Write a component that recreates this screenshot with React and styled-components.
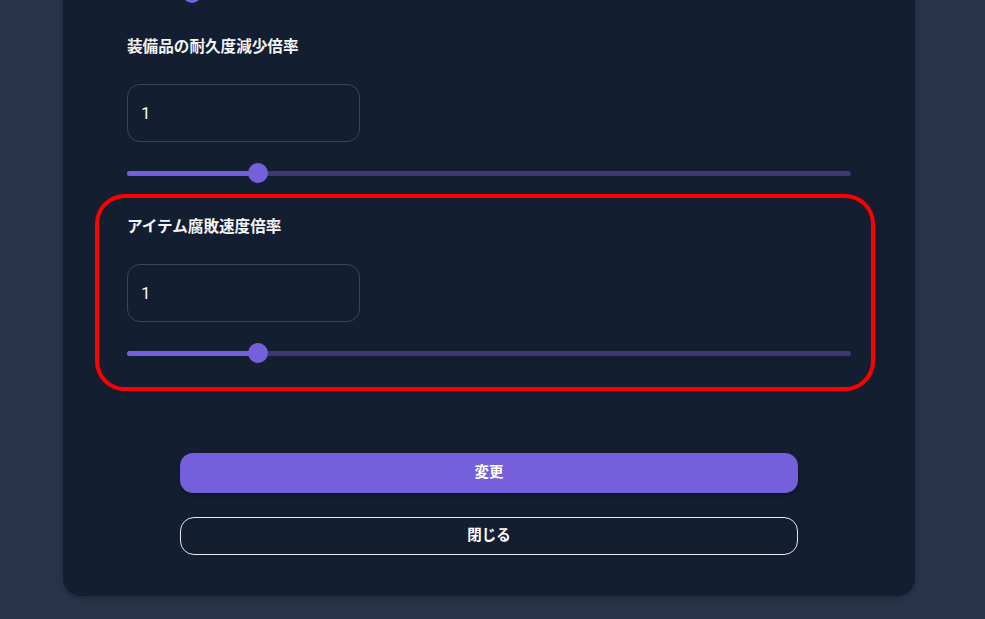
import React from "react";
import styled, { createGlobalStyle } from "styled-components";

const Global = createGlobalStyle`
  html, body { margin: 0; padding: 0; background: #29344b; }
  body { overflow: hidden; font-family: "Inter", "Noto Sans CJK JP", sans-serif; }
`;

const Page = styled.div`
  width: 985px;
  height: 619px;
  overflow: hidden;
  padding-left: 63px;
  box-sizing: border-box;
`;

const Card = styled.div`
  width: 852px;
  margin-top: -57px;
  box-sizing: border-box;
  background: #131e31;
  border-radius: 18px;
  padding: 40px 64px 41px;
  box-shadow: 0 2px 6px rgba(0, 0, 0, 0.25);
  display: flex;
  flex-direction: column;
`;

const Fields = styled.div`
  display: flex;
  flex-direction: column;
  gap: 31px;
`;

const Field = styled.div`
  position: relative;
  display: flex;
  flex-direction: column;
`;

const Label = styled.div`
  font-family: "Noto Sans CJK JP", sans-serif;
  font-weight: 700;
  font-size: 15.6px;
  line-height: 22px;
  color: #f3f4f6;
  margin-bottom: 28px;
`;

const Input = styled.input`
  width: 233px;
  height: 58px;
  box-sizing: border-box;
  border: 1px solid #3b4558;
  border-radius: 13px;
  background: transparent;
  color: #f3f4f6;
  font-family: "Roboto", "Noto Sans CJK JP", sans-serif;
  font-size: 17px;
  padding: 0 13px;
  outline: none;
  margin-bottom: 21px;
`;

const SliderRow = styled.div`
  position: relative;
  height: 20px;
  display: flex;
  align-items: center;
`;

const Track = styled.div`
  position: relative;
  width: 100%;
  height: 5px;
  border-radius: 3px;
  background: #3b3872;
`;

const Fill = styled.div`
  height: 100%;
  border-radius: 3px;
  background: #7360da;
`;

const Thumb = styled.div`
  position: absolute;
  top: 50%;
  width: 20px;
  height: 20px;
  border-radius: 50%;
  background: #7460db;
  transform: translate(-50%, -50%);
`;

const Highlight = styled.div`
  position: absolute;
  top: -20px;
  left: -32px;
  right: -24px;
  bottom: -28px;
  border: 4px solid #ff0000;
  border-radius: 30px;
  pointer-events: none;
`;

const Buttons = styled.div`
  margin: 90px 53px 0;
  display: flex;
  flex-direction: column;
  gap: 24px;
`;

const Button = styled.button`
  width: 100%;
  height: ${(p) => (p.$primary ? "40px" : "38px")};
  border-radius: ${(p) => (p.$primary ? "13px" : "14px")};
  border: ${(p) => (p.$primary ? "none" : "1px solid #e8e8ee")};
  background: ${(p) => (p.$primary ? "#7360da" : "transparent")};
  color: #ffffff;
  font-family: "Noto Sans CJK JP", sans-serif;
  font-size: 14.5px;
  line-height: 20px;
  padding: 0 0 4px;
  font-weight: ${(p) => (p.$primary ? 700 : 600)};
  box-shadow: ${(p) => (p.$primary ? "0 2px 4px rgba(0,0,0,0.3)" : "none")};
  cursor: pointer;
`;

function Slider({ pct }) {
  return (
    <SliderRow>
      <Track>
        <Fill style={{ width: `${pct}%` }} />
        <Thumb style={{ left: `${pct}%` }} />
      </Track>
    </SliderRow>
  );
}

function SettingField({ label, value, pct, highlighted }) {
  return (
    <Field>
      <Label>{label}</Label>
      <Input defaultValue={value} />
      <Slider pct={pct} />
      {highlighted && <Highlight />}
    </Field>
  );
}

export default function App() {
  return (
    <>
      <Global />
      <Page>
        <Card>
          <Fields>
            <Slider pct={9} />
            <SettingField label="装備品の耐久度減少倍率" value="1" pct={18.1} />
            <SettingField label="アイテム腐敗速度倍率" value="1" pct={18.1} highlighted />
          </Fields>
          <Buttons>
            <Button $primary>変更</Button>
            <Button>閉じる</Button>
          </Buttons>
        </Card>
      </Page>
    </>
  );
}
